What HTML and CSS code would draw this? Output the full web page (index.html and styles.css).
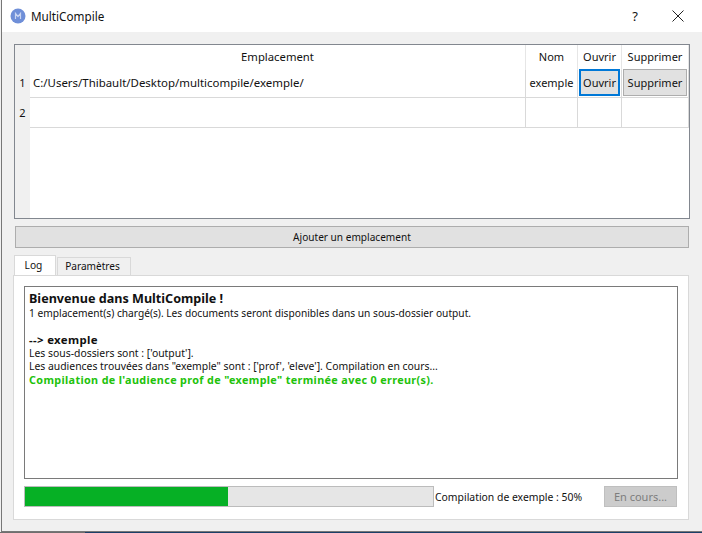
FILE: index.html
```html
<!DOCTYPE html>
<html lang="fr">
<head>
<meta charset="utf-8">
<title>MultiCompile</title>
<link rel="stylesheet" href="styles.css">
</head>
<body>
<div class="window">
  <header class="titlebar">
    <svg class="appicon" width="16" height="16" viewBox="0 0 16 16"><circle cx="8" cy="8" r="7.5" fill="#6f8fd8"/><path d="M5.500 11V5.500L8 8.500l2.500-3V11" fill="none" stroke="#c9d5f2" stroke-width="1.200"/></svg>
    <span class="title">MultiCompile</span>
    <span class="help">?</span>
    <svg class="close" width="12" height="12" viewBox="0 0 12 12"><path d="M.5.5l11 11M11.500.5l-11 11" fill="none" stroke="#222" stroke-width="1"/></svg>
  </header>
  <main class="content">
    <section class="table">
      <div class="row head">
        <div class="rowhead"></div>
        <div class="cell c-path center headpath">Emplacement</div>
        <div class="cell c-name center">Nom</div>
        <div class="cell c-open center">Ouvrir</div>
        <div class="cell c-del center">Supprimer</div>
      </div>
      <div class="row r1">
        <div class="rowhead">1</div>
        <div class="cell c-path line path">C:/Users/Thibault/Desktop/multicompile/exemple/</div>
        <div class="cell c-name line center">exemple</div>
        <div class="cell c-open line"><button class="btn focus">Ouvrir</button></div>
        <div class="cell c-del line"><button class="btn">Supprimer</button></div>
      </div>
      <div class="row r2">
        <div class="rowhead">2</div>
        <div class="cell c-path line"></div>
        <div class="cell c-name line"></div>
        <div class="cell c-open line"></div>
        <div class="cell c-del line"></div>
      </div>
      <div class="row rest"><div class="rowhead"></div><div class="blank"></div></div>
    </section>
    <button class="add">Ajouter un emplacement</button>
    <nav class="tabs">
      <span class="tab active">Log</span>
      <span class="tab">Paramètres</span>
    </nav>
    <section class="panel">
      <div class="log">
        <p class="h1">Bienvenue dans MultiCompile !</p>
        <p class="welcome">1 emplacement(s) chargé(s). Les documents seront disponibles dans un sous-dossier output.</p>
        <p class="empty">&nbsp;</p>
        <p class="h2">--&gt; exemple</p>
        <p>Les sous-dossiers sont : ['output'].</p>
        <p>Les audiences trouvées dans "exemple" sont : ['prof', 'eleve']. Compilation en cours...</p>
        <p class="ok">Compilation de l'audience prof de "exemple" terminée avec 0 erreur(s).</p>
      </div>
      <div class="status">
        <div class="bar"><div class="fill"></div></div>
        <span class="label">Compilation de exemple : 50%</span>
        <button class="busy" disabled>En cours...</button>
      </div>
    </section>
  </main>
</div>
<div class="desktop"><span class="d1"></span><span class="d2"></span></div>
</body>
</html>
```
FILE: styles.css
```css
* { box-sizing: border-box; }
html, body { margin: 0; padding: 0; }
body { width: 702px; height: 533px; overflow: hidden; background: #f0f0f0; font-family: "Noto Sans", sans-serif; font-size: 11px; color: #111; display: flex; flex-direction: column; }
.window { height: 532px; margin-left: 1px; border-left: 1px solid #777; border-bottom: 1px solid #777; display: flex; flex-direction: column; }
.titlebar { height: 32px; flex: none; background: #fff; display: flex; align-items: center; padding-left: 8px; }
.appicon { flex: none; }
.title { margin-left: 5px; font-size: 11.700px; }
.help { margin-left: auto; margin-right: 34px; font-size: 13px; }
.close { margin-right: 18px; }
.content { flex: 1; background: #f0f0f0; padding: 12px 0 0 12px; display: flex; flex-direction: column; }
.table { width: 676px; height: 175px; flex: none; border: 1px solid #82878f; background: #fff; display: flex; flex-direction: column; }
.row { display: flex; }
.head { height: 25px; }
.r1 { height: 28px; }
.r2 { height: 30px; }
.rest { flex: 1; }
.rowhead { width: 15px; flex: none; background: #f0f0f0; text-align: center; line-height: 26px; }
.r2 .rowhead { line-height: 30px; }
.blank { flex: 1; }
.cell { flex: none; height: 100%; display: flex; align-items: center; padding-bottom: 2px; }
.center { justify-content: center; }
.line { border-bottom: 1px solid #d9d9d9; }
.c-path { width: 496px; border-right: 1px solid #d9d9d9; padding-left: 3px; }
.path { font-size: 11.450px; }
.headpath { font-size: 11.300px; padding-left: 0; }
.c-name { width: 52px; border-right: 1px solid #d9d9d9; }
.c-open { width: 44px; border-right: 1px solid #d9d9d9; }
.c-del { width: 67px; border-right: 1px solid #d9d9d9; }
.head .cell { border-right: 1px solid #e6e6e6; }
.btn { font: inherit; color: inherit; padding: 0; background: #e1e1e1; border: 1px solid #adadad; height: 27px; width: 64px; margin: -1px 0 0 1px; align-self: flex-start; }
.focus { width: 41px; border: 2px solid #0078d7; }
.add { font-family: inherit; font-size: 10.100px; color: inherit; flex: none; width: 674px; height: 22px; margin: 7px 0 0 1px; padding: 0; background: #e1e1e1; border: 1px solid #adadad; }
.tabs { height: 20px; margin-top: 7px; flex: none; display: flex; align-items: flex-end; }
.tab { height: 18px; width: 74px; padding: 0 3px 0 0; margin-left: 1px; border: 1px solid #d9d9d9; border-bottom: 0; line-height: 17px; text-align: center; font-size: 10.100px; background: #f0f0f0; }
.tab.active { height: 20px; width: 42px; margin-left: 0; padding-right: 3px; background: #fff; line-height: 18px; font-size: 10.200px; }
.panel { width: 676px; height: 245px; flex: none; margin-left: -1px; background: #fff; border: 1px solid #d9d9d9; padding: 10px 9px 0 10px; }
.log { height: 193px; width: 654px; border: 1px solid #7a7a7a; padding: 4px 4px; background: #fff; }
.log p { margin: 0; line-height: 13px; font-size: 10.400px; }
.log .welcome { font-size: 10.200px; }
.log .h1 { font-size: 12.600px; font-weight: 700; line-height: 16px; }
.log .h2 { font-size: 11.400px; font-weight: 700; line-height: 14px; letter-spacing: 0.350px; }
.log .ok { color: #22c20b; font-weight: 700; font-size: 10.800px; letter-spacing: 0.350px; line-height: 13px; }
.status { display: flex; align-items: center; margin-top: 7px; height: 21px; }
.bar { width: 410px; height: 21px; flex: none; background: #e6e6e6; border: 1px solid #bcbcbc; }
.fill { width: 49.800%; height: 100%; background: #06b025; }
.label { margin-left: 1px; font-size: 10.400px; }
.busy { font: inherit; margin-left: auto; margin-right: 2px; width: 73px; height: 21px; padding: 0; background: #cccccc; border: 1px solid #bfbfbf; color: #7d7d7d; }
.desktop { height: 1px; flex: none; display: flex; }
.d1 { width: 85px; background: #6e6e6e; }
.d2 { flex: 1; background: #1c3f68; }
```
